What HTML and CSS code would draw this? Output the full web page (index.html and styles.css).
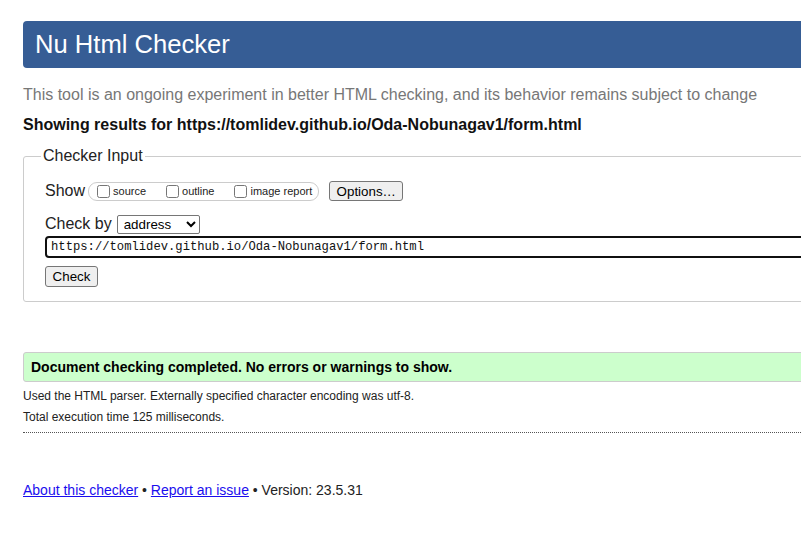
FILE: index.html
```html
<!DOCTYPE html>
<html lang="en">
<head>
<meta charset="utf-8">
<title>Nu Html Checker</title>
<link rel="stylesheet" href="styles.css">
</head>
<body>
<div class="page">
  <h1 class="masthead">Nu Html Checker</h1>
  <p class="intro">This tool is an ongoing experiment in better HTML checking, and its behavior remains subject to change</p>
  <p class="results-for">Showing results for https://tomlidev.github.io/Oda-Nobunagav1/form.html</p>
  <fieldset class="checker-input">
    <legend>Checker Input</legend>
    <div class="row show-row">
      <span class="row-label">Show</span>
      <span class="pill">
        <label class="opt"><input type="checkbox">source</label>
        <label class="opt"><input type="checkbox">outline</label>
        <label class="opt"><input type="checkbox">image report</label>
      </span>
      <button type="button" class="btn options-btn">Options…</button>
    </div>
    <div class="row by-row">
      <span class="row-label">Check by</span>
      <select class="by-select"><option>address</option></select>
    </div>
    <div class="url-row">
      <input class="url" type="text" value="https://tomlidev.github.io/Oda-Nobunagav1/form.html">
    </div>
    <div class="submit-row">
      <button type="button" class="btn check-btn">Check</button>
    </div>
  </fieldset>
  <p class="success">Document checking completed. No errors or warnings to show.</p>
  <p class="detail">Used the HTML parser. Externally specified character encoding was utf-8.</p>
  <p class="detail">Total execution time 125 milliseconds.</p>
  <hr class="dotted">
  <p class="footer"><a href="#">About this checker</a> • <a href="#">Report an issue</a> • Version: 23.5.31</p>
</div>
</body>
</html>
```
FILE: styles.css
```css
html, body {
  margin: 0;
  padding: 0;
  overflow: hidden;
  background: #fff;
}
body {
  font-family: "Liberation Sans", Arial, sans-serif;
  color: #222;
}
.page {
  width: 1000px;
  padding: 21px 0 0 23px;
}
.masthead {
  margin: 0;
  height: 47px;
  line-height: 47px;
  padding-left: 12px;
  background: #365d95;
  color: #fff;
  font-size: 25.6px;
  font-weight: normal;
  border-radius: 4px;
}
.intro {
  margin: 17px 0 0;
  font-size: 16px;
  line-height: 19px;
  color: #777;
}
.results-for {
  margin: 11px 0 0;
  font-size: 16px;
  line-height: 19px;
  font-weight: bold;
  color: #111;
}
.checker-input {
  margin: 12px 0 0;
  padding: 15px 21px 14px;
  border: 1px solid #ccc;
  border-radius: 3px;
  min-width: 0;
}
.checker-input legend {
  margin-left: -4px;
  padding: 0 2px;
  font-size: 16px;
  line-height: 20px;
  color: #222;
}
.row {
  display: flex;
  align-items: center;
  height: 20px;
  font-size: 16px;
}
.by-row {
  margin-top: 13px;
}
.pill {
  display: flex;
  align-items: center;
  gap: 16px;
  height: 17px;
  margin-left: 3px;
  padding: 0 6px 0 4px;
  border: 1px solid #ccc;
  border-radius: 9px;
  font-size: 11px;
}
.opt {
  display: flex;
  align-items: center;
  color: #222;
}
.opt input {
  width: 13px;
  height: 13px;
  margin: 0 3px 0 4px;
}
.btn {
  font-family: "Liberation Sans", Arial, sans-serif;
  font-size: 13.33px;
  color: #000;
  background: #efefef;
  border: 1px solid #767676;
  border-radius: 3px;
  height: 20px;
  padding: 0 6px;
}
.options-btn {
  margin-left: 10px;
  width: 74px;
}
.by-select {
  margin-left: 5px;
  width: 83px;
  height: 19px;
  font-family: "Liberation Sans", Arial, sans-serif;
  font-size: 13.33px;
  color: #000;
  border: 1px solid #767676;
  border-radius: 2px;
  background: #fff;
  padding: 0 0 0 2px;
}
.url-row {
  margin-top: 2px;
}
.url {
  display: block;
  box-sizing: border-box;
  margin-left: 0;
  width: 940px;
  height: 22px;
  padding: 0 4px;
  border: 2px solid #101010;
  border-radius: 4px;
  font-family: "Liberation Mono", "DejaVu Sans Mono", monospace;
  font-size: 12.2px;
  color: #111;
  outline: none;
}
.submit-row {
  margin-top: 8px;
  display: flex;
}
.check-btn {
  width: 53px;
  height: 21px;
}
.success {
  margin: 50px 0 0;
  box-sizing: border-box;
  height: 30px;
  line-height: 28px;
  padding-left: 7px;
  border: 1px solid #ccc;
  border-radius: 3px;
  background: #ccffcc;
  font-size: 14px;
  font-weight: bold;
  color: #000;
}
.detail {
  margin: 0;
  font-size: 12px;
  line-height: 21px;
  color: #222;
}
.success + .detail {
  margin-top: 4px;
}
.dotted {
  margin: 4px 0 0;
  border: 0;
  border-top: 1px dotted #555;
  height: 0;
}
.footer {
  margin: 49px 0 0;
  font-size: 14px;
  line-height: 16px;
  color: #222;
}
.footer a {
  color: #1a0dee;
  text-decoration: underline;
}
```
